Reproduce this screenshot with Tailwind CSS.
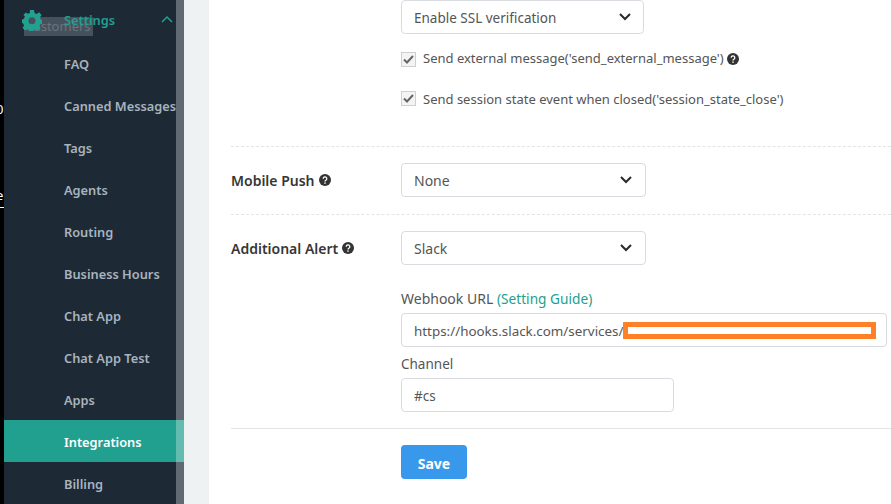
<!doctype html>
<html><head><meta charset="utf-8"><script src="https://cdn.jsdelivr.net/npm/@tailwindcss/browser@4"></script></head>
<body class="m-0 bg-white">
<div class="flex w-[891px] h-[504px] overflow-hidden font-['Noto_Sans',sans-serif] text-[14px] text-[#555]">
  <div class="relative w-[4px] shrink-0 bg-black overflow-hidden">
    <span class="absolute left-[-4px] top-[100px] text-[13px] leading-[18px] text-white">0</span>
    <span class="absolute left-[-4px] top-[187px] text-[13px] leading-[16px] text-white">e</span>
    <div class="absolute left-0 top-[207px] h-[1px] w-[4px] bg-white"></div>
  </div>
  <aside class="relative flex w-[180px] shrink-0 flex-col bg-[#1d2a36] text-[12.8px] font-semibold text-[#a8b3bf]">
    <div class="relative flex h-[42px] items-center pl-[60px] text-[#22a090]">
      <span class="absolute left-[20px] top-[17px] flex h-[19px] w-[69px] items-center justify-center bg-[#5a636c]/70 text-[13px] font-normal text-[#6a747e]">customers</span>
      <svg class="absolute left-[18px] top-[10px]" width="20" height="21" viewBox="0 0 20 21"><path fill="#22a090" fill-rule="evenodd" d="M8 0h4l.6 3 2 .9 2.600-1.600 2.400 2.600-1.600 2.500.8 2 1.400.6v3.600l-2.200.6-.8 2 1.400 2.400-2.600 2.200-2.400-1.400-2 .8-.8 1.800H8l-.6-2-2-.8L3 20.400.6 18 2 15.600l-.8-2L0 13V9.400l2.200-.6.8-2L1.400 4.900l2.400-2.500L6 3.800l1.800-.8zM10 7.200a3.500 3.500 0 1 0 0 7 3.500 3.500 0 0 0 0-7z"/></svg>
      <span class="relative">Settings</span>
      <svg class="absolute left-[157px] top-[15px]" width="12" height="8" viewBox="0 0 12 8" fill="none" stroke="#22a090" stroke-width="1.500"><path d="M1 7l5-5 5 5"/></svg>
    </div>
    <a class="mt-[1px] flex h-[42px] items-center pl-[60px] pt-[2px]">FAQ</a>
    <a class="flex h-[42px] items-center whitespace-nowrap pl-[60px] pt-[2px]">Canned Messages</a>
    <a class="flex h-[42px] items-center pl-[60px] pt-[2px]">Tags</a>
    <a class="flex h-[42px] items-center pl-[60px] pt-[2px]">Agents</a>
    <a class="flex h-[42px] items-center pl-[60px] pt-[2px]">Routing</a>
    <a class="flex h-[42px] items-center pl-[60px] pt-[2px]">Business Hours</a>
    <a class="flex h-[42px] items-center pl-[60px] pt-[2px]">Chat App</a>
    <a class="flex h-[42px] items-center pl-[60px] pt-[2px]">Chat App Test</a>
    <a class="flex h-[42px] items-center pl-[60px] pt-[2px]">Apps</a>
    <a class="flex h-[42px] items-center bg-[#21a090] pl-[60px] pt-[2px] text-white">Integrations</a>
    <a class="flex h-[42px] items-center pl-[60px] pt-[4px]">Billing</a>
    <div class="absolute right-0 top-0 h-full w-[8px] bg-white/30"></div>
  </aside>
  <div class="w-[25px] shrink-0 bg-[#eff2f3]"></div>
  <main class="flex-1 pl-[22px]">
    <div class="pl-[170px]">
      <div class="flex h-[34px] w-[243px] items-center justify-between rounded-[4px] border border-[#d8dce0] px-[12px] text-[13.5px]"><span class="pt-[2px]">Enable SSL verification</span><svg width="12" height="8" viewBox="0 0 12 8" fill="none" stroke="#2a2a2a" stroke-width="2"><path d="M1 1l5 5 5-5"/></svg></div>
      <label class="mt-[16px] flex h-[18px] items-center gap-[7px] text-[13px]">
        <span class="flex h-[15px] w-[15px] items-center justify-center border border-[#cfcfcf] bg-[#f4f4f4]"><svg width="11" height="9" viewBox="0 0 11 9" fill="none" stroke="#666" stroke-width="2"><path d="M1 4.500l3 3 6-6.500"/></svg></span>
        <span class="whitespace-nowrap">Send external message('send_external_message')</span>
        <svg class="-ml-[4px]" width="12" height="12" viewBox="0 0 12 12"><circle cx="6" cy="6" r="6" fill="#333"/><path d="M4.200 4.700a1.800 1.800 0 1 1 2.700 1.500c-.6.400-.9.600-.9 1.300" fill="none" stroke="#fff" stroke-width="1.300"/><rect x="5.300" y="8.400" width="1.400" height="1.400" fill="#fff"/></svg>
      </label>
      <label class="mt-[22px] flex h-[18px] items-center gap-[7px] text-[13px]">
        <span class="mb-[2px] flex h-[15px] w-[15px] items-center justify-center border border-[#cfcfcf] bg-[#f4f4f4]"><svg width="11" height="9" viewBox="0 0 11 9" fill="none" stroke="#666" stroke-width="2"><path d="M1 4.500l3 3 6-6.500"/></svg></span>
        <span class="whitespace-nowrap pt-[2px]">Send session state event when closed('session_state_close')</span>
      </label>
    </div>
    <div class="mt-[38px] border-t border-dashed border-[#e4e4e4]"></div>
    <div class="mt-[16px] flex items-center">
      <div class="flex w-[170px] items-center gap-[4px] font-semibold text-[#363636]">Mobile Push <svg width="12" height="12" viewBox="0 0 12 12"><circle cx="6" cy="6" r="6" fill="#333"/><path d="M4.200 4.700a1.800 1.800 0 1 1 2.700 1.500c-.6.400-.9.600-.9 1.300" fill="none" stroke="#fff" stroke-width="1.300"/><rect x="5.300" y="8.400" width="1.400" height="1.400" fill="#fff"/></svg></div>
      <div class="flex h-[34px] w-[245px] items-center justify-between rounded-[4px] border border-[#d8dce0] px-[12px] pr-[13px]"><span>None</span><svg width="12" height="8" viewBox="0 0 12 8" fill="none" stroke="#2a2a2a" stroke-width="2"><path d="M1 1l5 5 5-5"/></svg></div>
    </div>
    <div class="mt-[17px] border-t border-dashed border-[#e4e4e4]"></div>
    <div class="mt-[16px] flex items-center">
      <div class="flex w-[170px] items-center gap-[4px] font-semibold text-[#363636]">Additional Alert <svg width="12" height="12" viewBox="0 0 12 12"><circle cx="6" cy="6" r="6" fill="#333"/><path d="M4.200 4.700a1.800 1.800 0 1 1 2.700 1.500c-.6.400-.9.600-.9 1.300" fill="none" stroke="#fff" stroke-width="1.300"/><rect x="5.300" y="8.400" width="1.400" height="1.400" fill="#fff"/></svg></div>
      <div class="flex h-[34px] w-[245px] items-center justify-between rounded-[4px] border border-[#d8dce0] px-[12px] pr-[13px]"><span>Slack</span><svg width="12" height="8" viewBox="0 0 12 8" fill="none" stroke="#2a2a2a" stroke-width="2"><path d="M1 1l5 5 5-5"/></svg></div>
    </div>
    <div class="pl-[170px]">
      <div class="mt-[24px] h-[20px] leading-[20px]">Webhook URL <a class="text-[13.7px] text-[#21a090]">(Setting Guide)</a></div>
      <div class="relative mt-[4px] flex h-[34px] w-[486px] items-center rounded-[4px] border border-[#d8dce0] px-[12px] text-[13.4px]"><span class="pt-[3px]">https://hooks.slack.com/services/</span>
        <div class="absolute left-[221px] top-[8px] h-[17px] w-[253px] border-[5px] border-[#ff8026] bg-white"></div></div>
      <div class="mt-[7px] h-[20px] text-[13.5px] leading-[20px]">Channel</div>
      <div class="mt-[4px] flex h-[34px] w-[273px] items-center rounded-[4px] border border-[#d8dce0] px-[12px] pt-[2px] text-[13.5px]">#cs</div>
    </div>
    <div class="mt-[16px] border-t border-[#e4e4e4]"></div>
    <div class="mt-[16px] pl-[170px]"><button class="h-[34px] w-[66px] rounded-[4px] bg-[#3898ec] pt-[2px] text-[14px] font-bold text-white">Save</button></div>
  </main>
</div>
</body></html>
